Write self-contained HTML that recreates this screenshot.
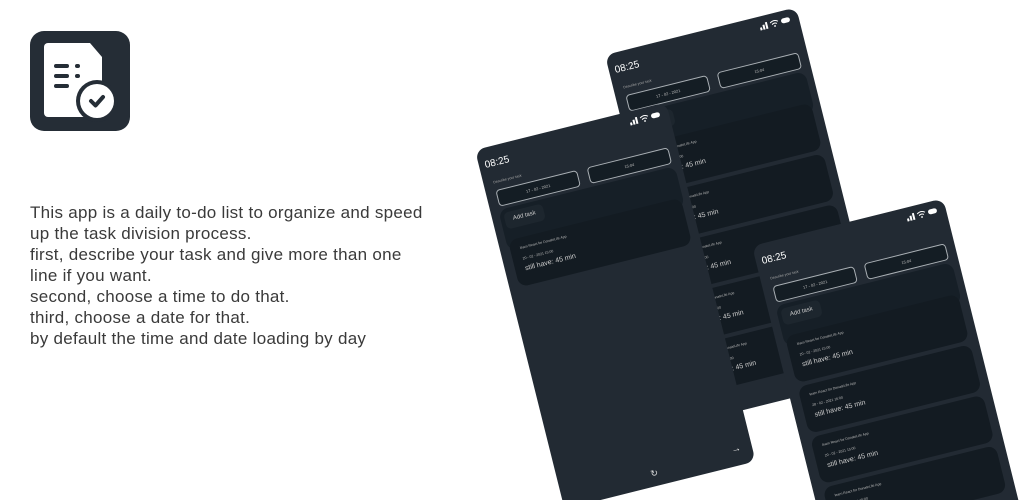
<!DOCTYPE html>
<html style="width:1024px;height:500px;overflow:hidden"><head><meta charset="utf-8"><style>
*{margin:0;padding:0;box-sizing:border-box}
body{width:1024px;height:500px;background:#fff;position:relative;overflow:hidden;font-family:"Liberation Sans",sans-serif}
.clip{position:absolute;left:0;top:0;width:1024px;height:500px;overflow:hidden;clip-path:inset(0)}
.icon{position:absolute;left:30px;top:31px;width:100px;height:100px;background:#252d36;border-radius:14px}
.desc{position:absolute;left:30px;top:202px;font-size:17px;line-height:21px;color:#3a3a3a;letter-spacing:0.28px;white-space:nowrap}
.ph{position:absolute;width:197px;background:#222a33;border-radius:10px;transform-origin:0 0;transform:rotate(-14deg);overflow:hidden;color:#e8e8e8}
.ph .t{position:absolute;left:6px;top:12px;font-size:10px;color:#fff}
.ph .st{position:absolute;right:8px;top:6px;width:34px;height:8px}
.ph .lab{position:absolute;left:10px;top:34px;font-size:3.5px;color:#aaa}
.ph .box{position:absolute;top:44px;width:84px;height:17px;border:1px solid #a9afb4;border-radius:4px;background:#141d24;font-size:4px;color:#bbb;text-align:center;line-height:15px}
.ph .panel{position:absolute;left:8px;top:64px;width:182px;height:42px;background:#161f27;border-radius:9px}
.ph .add{position:absolute;left:12px;top:68px;width:40px;height:17px;background:#1d262e;border-radius:5px;font-size:6px;line-height:17px;text-align:center;color:#ccc}
.ph .card{position:absolute;left:10px;width:178px;height:48px;background:#131b22;border-radius:9px;padding:8px 10px}
.card .a{font-size:3.5px;color:#bbb}
.card .b{font-size:3.5px;color:#bbb;margin-top:7px}
.card .c{font-size:7px;color:#ccc;margin-top:5px}
</style></head><body>
<div class="clip">
<div class="icon">
<svg width="100" height="100" viewBox="0 0 100 100">
<path d="M18 12 H60 L72 26 V82 a4 4 0 0 1-4 4 H18 a4 4 0 0 1-4-4 V16 a4 4 0 0 1 4-4z" fill="#fff"/>
<rect x="24" y="33" width="15" height="4" rx="2" fill="#252d36"/><rect x="45" y="33" width="5" height="4" rx="2" fill="#252d36"/>
<rect x="24" y="43" width="15" height="4" rx="2" fill="#252d36"/><rect x="45" y="43" width="5" height="4" rx="2" fill="#252d36"/>
<rect x="24" y="53" width="15" height="4" rx="2" fill="#252d36"/>
<circle cx="67" cy="70" r="21" fill="#252d36"/><circle cx="67" cy="70" r="17" fill="#fff"/>
<path d="M61 70 L65.5 74.5 L73 66" stroke="#252d36" stroke-width="4" fill="none" stroke-linecap="round" stroke-linejoin="round"/>
</svg></div>
<div class="desc">This app is a daily to-do list to organize and speed<br>up the task division process.<br>first, describe your task and give more than one<br>line if you want.<br>second, choose a time to do that.<br>third, choose a date for that.<br>by default the time and date loading by day</div>

<div class="ph" style="left:605px;top:55px;height:378px">
<div class="t">08:25</div>
<svg class="st" viewBox="0 0 34 8"><rect x="2" y="5" width="2" height="3" fill="#fff"/><rect x="5" y="3" width="2" height="5" fill="#fff"/><rect x="8" y="1" width="2" height="7" fill="#fff"/><path d="M13 3 q4-3 8 0 M14.5 5 q2.5-2 5 0" stroke="#fff" fill="none" stroke-width="1"/><circle cx="17" cy="7" r="0.9" fill="#fff"/><rect x="24" y="1.5" width="9" height="5" rx="2.5" fill="#fff"/></svg>
<div class="lab">Describe your task</div>
<div class="box" style="left:10px">17 - 02 - 2021</div><div class="box" style="left:104px">15:04</div>
<div class="panel"></div><div class="add">Add task</div>
<div class="card" style="top:96px"><div class="a">learn React for DonateLife App</div><div class="b">20 - 02 - 2021 15:00</div><div class="c">still have: 45 min</div></div>
<div class="card" style="top:148px"><div class="a">learn React for DonateLife App</div><div class="b">20 - 02 - 2021 15:00</div><div class="c">still have: 45 min</div></div>
<div class="card" style="top:200px"><div class="a">learn React for DonateLife App</div><div class="b">20 - 02 - 2021 15:00</div><div class="c">still have: 45 min</div></div>
<div class="card" style="top:252px"><div class="a">learn React for DonateLife App</div><div class="b">20 - 02 - 2021 15:00</div><div class="c">still have: 45 min</div></div>
<div class="card" style="top:304px"><div class="a">learn React for DonateLife App</div><div class="b">20 - 02 - 2021 15:00</div><div class="c">still have: 45 min</div></div>
<div style="position:absolute;left:150px;top:360px;font-size:9px;color:#ddd">↻</div>
</div>

<div class="ph" style="left:475px;top:150px;height:370px">
<div class="t">08:25</div>
<svg class="st" viewBox="0 0 34 8"><rect x="2" y="5" width="2" height="3" fill="#fff"/><rect x="5" y="3" width="2" height="5" fill="#fff"/><rect x="8" y="1" width="2" height="7" fill="#fff"/><path d="M13 3 q4-3 8 0 M14.5 5 q2.5-2 5 0" stroke="#fff" fill="none" stroke-width="1"/><circle cx="17" cy="7" r="0.9" fill="#fff"/><rect x="24" y="1.5" width="9" height="5" rx="2.5" fill="#fff"/></svg>
<div class="lab">Describe your task</div>
<div class="box" style="left:10px">17 - 02 - 2021</div><div class="box" style="left:104px">15:04</div>
<div class="panel"></div><div class="add">Add task</div>
<div class="card" style="top:96px"><div class="a">learn React for DonateLife App</div><div class="b">20 - 02 - 2021 15:00</div><div class="c">still have: 45 min</div></div>
<div style="position:absolute;left:92px;top:352px;font-size:9px;color:#ddd">↻</div>
<div style="position:absolute;left:176px;top:348px;font-size:10px;color:#ddd">→</div>
</div>

<div class="ph" style="left:752px;top:246px;height:380px">
<div class="t">08:25</div>
<svg class="st" viewBox="0 0 34 8"><rect x="2" y="5" width="2" height="3" fill="#fff"/><rect x="5" y="3" width="2" height="5" fill="#fff"/><rect x="8" y="1" width="2" height="7" fill="#fff"/><path d="M13 3 q4-3 8 0 M14.5 5 q2.5-2 5 0" stroke="#fff" fill="none" stroke-width="1"/><circle cx="17" cy="7" r="0.9" fill="#fff"/><rect x="24" y="1.5" width="9" height="5" rx="2.5" fill="#fff"/></svg>
<div class="lab">Describe your task</div>
<div class="box" style="left:10px">17 - 02 - 2021</div><div class="box" style="left:104px">15:04</div>
<div class="panel"></div><div class="add">Add task</div>
<div class="card" style="top:96px"><div class="a">learn React for DonateLife App</div><div class="b">20 - 02 - 2021 15:00</div><div class="c">still have: 45 min</div></div>
<div class="card" style="top:148px"><div class="a">learn React for DonateLife App</div><div class="b">28 - 02 - 2021 16:00</div><div class="c">still have: 45 min</div></div>
<div class="card" style="top:200px"><div class="a">learn React for DonateLife App</div><div class="b">20 - 02 - 2021 15:00</div><div class="c">still have: 45 min</div></div>
<div class="card" style="top:252px"><div class="a">learn React for DonateLife App</div><div class="b">20 - 02 - 2021 15:00</div><div class="c">still have: 45 min</div></div>
</div>
</div>
</body></html>
